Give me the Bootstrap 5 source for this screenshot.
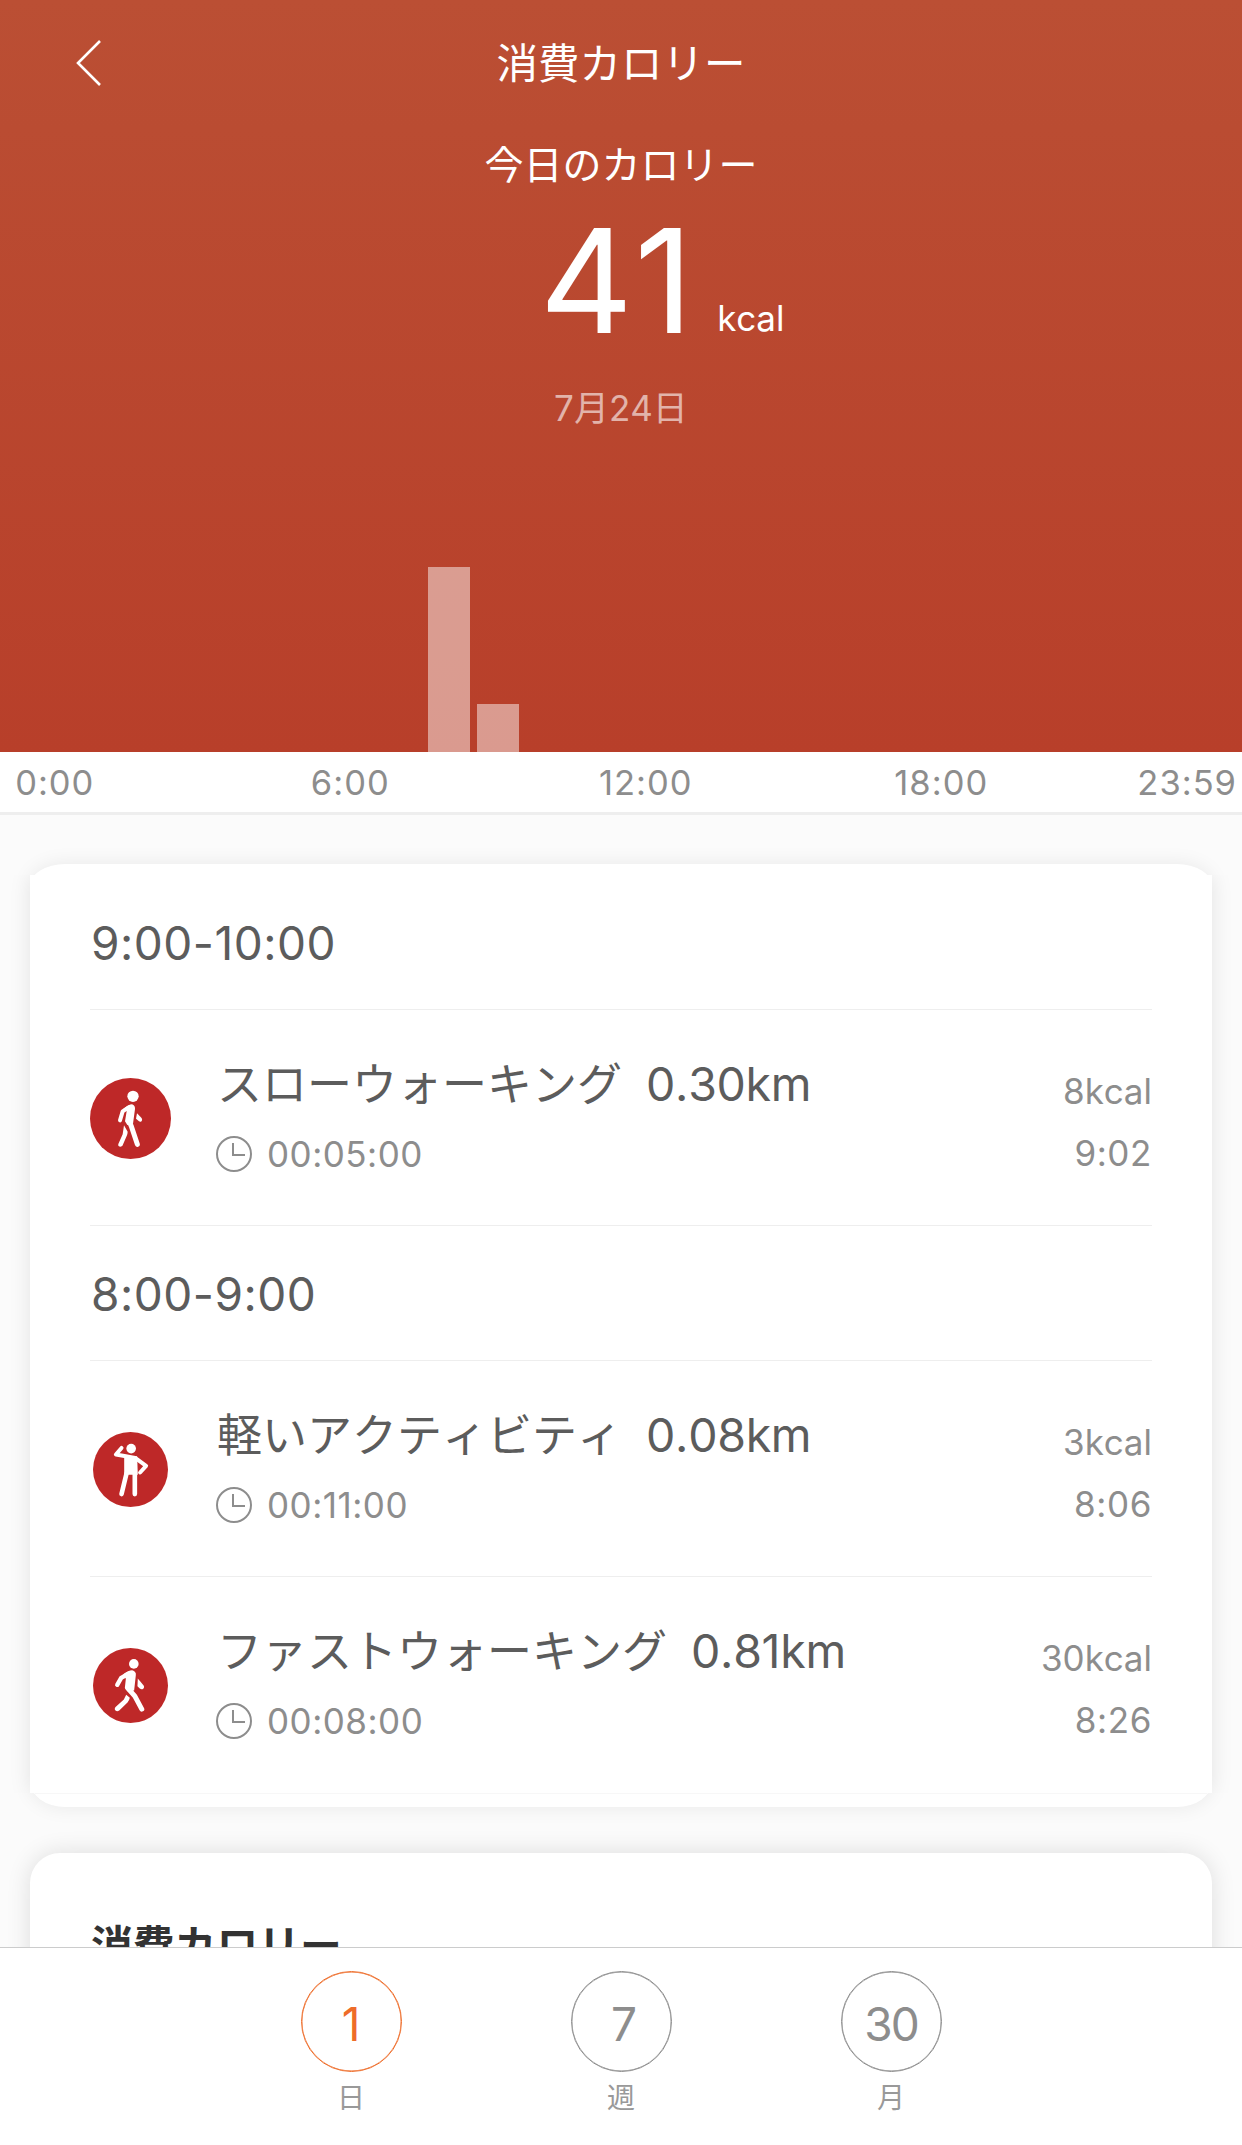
<!DOCTYPE html>
<html lang="ja">
<head>
<meta charset="utf-8">
<meta name="viewport" content="width=device-width, initial-scale=1">
<title>消費カロリー</title>
<link href="https://cdn.jsdelivr.net/npm/bootstrap@5.3.0/dist/css/bootstrap.min.css" rel="stylesheet">
<style>
  body { font-family: Inter, "Noto Sans CJK JP", sans-serif; background: #fbfbfb; color: #5c5c5c; height: 2145px; overflow: hidden; line-height: 1; font-kerning: none; }
  .hero { height: 752px; background: linear-gradient(#bb4f34 0, #ba4c32 128px, #b83f2a 752px); color: #fff; }
  .titlebar { height: 126px; padding: 0 76px; font-size: 41.5px; }
  .titlebar span { padding-top: 3px; }
  .titlebar svg, .titlebar .spacer { width: 26px; height: 46px; }
  .subtitle { height: 78px; line-height: 78px; font-size: 39px; }
  .total { height: 150px; padding: 2px 0 0 82px; }
  .total-num { font-size: 145px; letter-spacing: 1px; line-height: 150px; }
  .total-unit { font-size: 35px; margin-left: 23px; transform: translateY(-2px); }
  .day { height: 108px; line-height: 108px; font-size: 35px; color: rgba(255,255,255,.6); }
  .chart { padding-left: 428px; gap: 7px; }
  .chart div { width: 42px; background: rgba(255,255,255,.48); }
  .axis { height: 63px; border-bottom: 3px solid #eee; background: #fff; padding: 2px 5px 0 0; font-size: 34.5px; letter-spacing: 1px; color: #8d8d8d; }
  .axis .tick { width: 295.5px; text-align: center; flex: none; }
  .axis .tick:first-child { margin-left: -93px; }
  .cap-top, .cap-bottom { position: relative; }
  .cap-top { height: 11px; clip-path: inset(-30px -30px 0 -30px); }
  .cap-bottom { height: 14px; clip-path: inset(0 -30px -30px -30px); }
  .cap-top::before, .cap-bottom::before { content: ""; position: absolute; left: 0; right: 0; height: 40px; background: #fff; box-shadow: 0 0 20px rgba(0,0,0,.08); }
  .cap-top::before { top: 0; border-radius: 35px 35px 0 0 / 22px 22px 0 0; }
  .cap-bottom::before { bottom: 0; border-radius: 0 0 35px 35px / 0 0 26px 26px; }
  .cap-bottom::after { content: ""; position: absolute; top: 0; left: 5px; right: 5px; height: 1px; background: #f7f7f7; }
  .sheet-wrap { margin: 49px 30px 46px; }
  .sheet { background: #fff; padding: 0 60px; box-shadow: 0 0 20px rgba(0,0,0,.1); clip-path: inset(0 -30px); }
  .hour { height: 135px; border-bottom: 1px solid #eee; font-size: 46px; letter-spacing: .5px; padding: 2px 0 0 1px; line-height: 132px; }
  .entry { height: 216px; border-bottom: 1px solid #eee; }
  .entry:last-child { border-color: transparent; }
  .badge-icon { width: 81px; height: 81px; margin: 68px 46px 0 0; }
  .badge-icon.inset { padding: 3px; }
  .kind { font-size: 45px; line-height: 60px; }
  .kind span { font-size: 46.5px; margin-left: 24px; letter-spacing: -.3px; }
  .meta { font-size: 35px; color: #8d8d8d; letter-spacing: .5px; }
  .duration { line-height: 40px; margin-top: 19px; }
  .clock { width: 36px; height: 36px; margin: 0 15px 0 -1px; }
  .lines { padding-top: 44px; }
  .figures { padding: 50px 0 0; line-height: 62px; letter-spacing: 0; }
  .figures .when { letter-spacing: .6px; }
  .second { background: #fff; margin: 0 30px; height: 300px; border-radius: 30px; box-shadow: 0 0 24px rgba(0,0,0,.12); padding: 73px 61px; font-size: 41.8px; font-weight: 700; color: #333; }
  .tabs { height: 198px; background: #fff; border-top: 1px solid #ccc; padding-top: 23px; gap: 169px; }
  .tabs a { color: #8d8d8d; text-decoration: none; }
  .ring { width: 101px; height: 101px; border: 1px solid; box-shadow: inset 0 0 0 .4px; border-radius: 50%; font-size: 46px; padding-top: 4px; }
  .ring.week { padding-left: 6px; }
  .ring.month { letter-spacing: -2px; }
  .tabs small { display: block; font-size: 28px; line-height: 28px; margin-top: 12px; color: #999; }
  .tabs .active .ring { color: #ee6c29; }
</style>
</head>
<body>
<main class="d-flex flex-column">
  <header class="hero d-flex flex-column">
    <div class="titlebar d-flex align-items-center justify-content-between">
      <svg viewBox="0 0 26 46" fill="none" stroke="#fff" stroke-width="2.6"><path d="M24 1 2 23 24 45"/></svg>
      <span>消費カロリー</span>
      <span class="spacer"></span>
    </div>
    <div class="subtitle text-center">今日のカロリー</div>
    <div class="total d-flex justify-content-center align-items-baseline">
      <span class="total-num">41</span><span class="total-unit">kcal</span>
    </div>
    <div class="day text-center">7月24日</div>
    <div class="chart d-flex align-items-end flex-grow-1">
      <div style="height:185px"></div>
      <div style="height:48px"></div>
    </div>
  </header>
  <div class="axis d-flex align-items-center">
    <span class="tick">0:00</span><span class="tick">6:00</span><span class="tick">12:00</span><span class="tick">18:00</span><span class="ms-auto">23:59</span>
  </div>

  <section class="sheet-wrap">
    <div class="cap-top"></div>
    <div class="sheet">
      <div class="hour">9:00-10:00</div>
      <div class="entry d-flex align-items-start">
        <svg class="badge-icon" viewBox="60 113 243 243">
          <circle cx="181.500" cy="234.500" r="121.500" fill="#be2828"/>
          <g fill="#fff"><circle cx="189" cy="168" r="17"/>
          <path d="M160 206Q176 192 186 192Q196 196 195 206L189 250 172 254 165 243 170 213Z"/>
          <path d="M162 255 173 274Q173 280 170 287L158 315C154 323 142 319 145 311L158 282Z"/>
          <path d="M201 219 214 232C220 240 213 247 207 243L198 235Z"/></g>
          <g fill="none" stroke="#fff" stroke-linecap="round" stroke-linejoin="round"><path stroke-width="12" d="M176 201 158 213 150 240"/><path stroke-width="15" d="M177 242 184 258 202 312"/></g>
        </svg>
        <div class="lines flex-grow-1">
          <div class="kind">スローウォーキング<span>0.30km</span></div>
          <div class="meta duration d-flex align-items-center"><svg class="clock" viewBox="0 0 36 36" fill="none" stroke="#8d8d8d" stroke-width="2"><circle cx="18" cy="18" r="17"/><path d="M17 7V19H29"/></svg>00:05:00</div>
        </div>
        <div class="meta figures text-end"><div>8kcal</div><div class="when">9:02</div></div>
      </div>
      <div class="hour">8:00-9:00</div>
      <div class="entry d-flex align-items-start">
        <svg class="badge-icon inset" viewBox="69 125 226 226">
          <circle cx="182" cy="238" r="113" fill="#be2828"/>
          <g fill="#fff"><circle cx="184" cy="175" r="14.500"/><path d="M163 198 202 198 204 254H163Z"/></g>
          <g fill="none" stroke="#fff" stroke-linecap="round" stroke-linejoin="round"><path stroke-width="12" d="M155 173 138 193 168 198 196 203 229 227 211 247"/><path stroke-width="14" d="M170 250 155 312M195 250V312"/></g>
        </svg>
        <div class="lines flex-grow-1">
          <div class="kind">軽いアクティビティ<span>0.08km</span></div>
          <div class="meta duration d-flex align-items-center"><svg class="clock" viewBox="0 0 36 36" fill="none" stroke="#8d8d8d" stroke-width="2"><circle cx="18" cy="18" r="17"/><path d="M17 7V19H29"/></svg>00:11:00</div>
        </div>
        <div class="meta figures text-end"><div>3kcal</div><div class="when">8:06</div></div>
      </div>
      <div class="entry d-flex align-items-start">
        <svg class="badge-icon inset" viewBox="69 113 226 226">
          <circle cx="182" cy="226" r="113" fill="#be2828"/>
          <g fill="#fff"><circle cx="192" cy="161" r="14.500"/>
          <path d="M160 192Q176 180 187 180Q200 184 198 195L193 241 174 244 165 233 168 206Z"/>
          <path d="M169 254 180 263Q178 272 173 277L148 301C140 307 130 300 137 291L162 268Z"/>
          <path d="M204 205 221 225C227 234 217 241 210 235L203 228Z"/></g>
          <g fill="none" stroke="#fff" stroke-linecap="round" stroke-linejoin="round"><path stroke-width="13" d="M177 190 154 203 142 224"/><path stroke-width="15" d="M173 233 195 258 216 297"/></g>
        </svg>
        <div class="lines flex-grow-1">
          <div class="kind">ファストウォーキング<span>0.81km</span></div>
          <div class="meta duration d-flex align-items-center"><svg class="clock" viewBox="0 0 36 36" fill="none" stroke="#8d8d8d" stroke-width="2"><circle cx="18" cy="18" r="17"/><path d="M17 7V19H29"/></svg>00:08:00</div>
        </div>
        <div class="meta figures text-end"><div>30kcal</div><div class="when">8:26</div></div>
      </div>
    </div>
    <div class="cap-bottom"></div>
  </section>
  <section class="second">消費カロリー</section>
</main>
<nav class="tabs fixed-bottom d-flex justify-content-center">
  <a class="active text-center" href="#"><span class="ring d-flex align-items-center justify-content-center">1</span><small>日</small></a>
  <a class="text-center" href="#"><span class="ring week d-flex align-items-center justify-content-center">7</span><small>週</small></a>
  <a class="text-center" href="#"><span class="ring month d-flex align-items-center justify-content-center">30</span><small>月</small></a>
</nav>
<script src="https://cdn.jsdelivr.net/npm/bootstrap@5.3.0/dist/js/bootstrap.bundle.min.js"></script>
</body>
</html>
